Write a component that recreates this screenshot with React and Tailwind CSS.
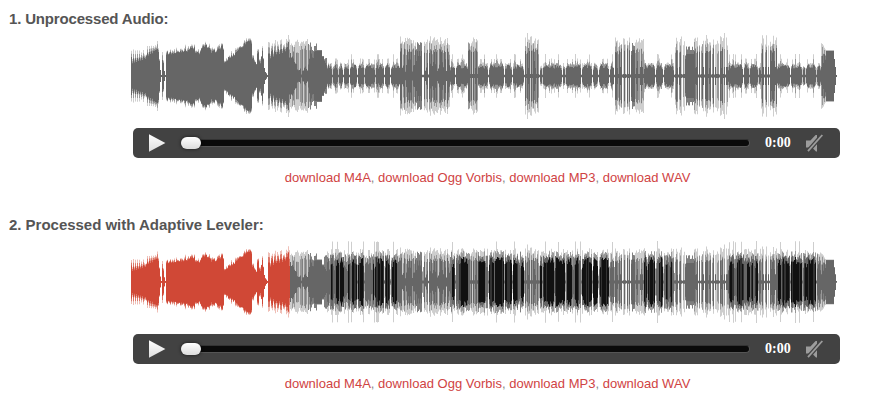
import React from "react";

const MID = 45;
const LENGTH = 706;

// Deterministic noise in 0..1 for a column and a channel
const noise = (x, k) => {
  const v = Math.sin(x * 127.1 + k * 311.7) * 43758.5453;
  return v - Math.floor(v);
};

// Envelope of the opening passage: [column, half height]
const OPENING = [
  [0, 13], [2, 12], [6, 13], [10, 14], [14, 17], [16, 20], [20, 22], [24, 24], [26, 27], [27, 24], [28, 15], [29, 6], [30, 1],
  [31, 16], [32, 13], [33, 5], [34, 1], [34.9, 1], [35, 22], [44, 22], [49, 24], [56, 25], [60, 27], [63, 27],
  [64, 22], [68, 22], [71, 27], [74, 31], [76, 28], [78, 26], [80, 23], [84, 24], [88, 26], [91, 30], [92, 26], [93, 12], [94, 12],
  [97, 17], [99, 18], [103, 21], [107, 26], [112, 30], [115, 33], [119, 35], [120, 31], [121, 18], [123, 15], [125, 11],
  [126, 22], [127, 22], [128, 13], [129, 12], [131, 23], [132, 16], [133, 8], [134, 4], [136, 1], [137, 0],
];

// Loud passages, a letter per column: D dark, m medium, g grey, l light, . gap
const LOUD = [
  [269, "DDlgDggDmDmDgmgD"],
  [293, "Dlgm.DmDgmDmDglmDDmgDmlDmg"],
  [337, "DDgDlDgmDg"],
  [394, "DgDmDlDgDmmgDg"],
  [484, "DDmgDgD.lDl.DlD."],
  [504, "gmmgglmgg"],
  [544, "gDm.gDl.gl"],
  [563, "DmgD.D.gDl.DDDgmD.gD.l"],
  [585, "lgg.DmDlg.lg"],
  [630, "gDl.gD.l.DmDDmlD"],
  [690, "gDmDm"],
];

const SOLID = [
  [285, 291, 27], [500, 504, 26], [554, 563, 22], [695, 703, 25],
];

// Quiet groups: start and end columns
const QUIET = [
  [196, 201], [202, 207], [208, 212], [213, 218], [219, 226], [227, 233], [234, 244], [245, 253], [254, 259],
  [260, 269], [319, 324], [325, 337], [347, 357], [358, 373], [374, 381], [382, 393],
  [409, 411], [412, 431], [432, 434], [435, 450], [451, 461], [462, 467], [468, 478], [479, 483],
  [513, 524], [525, 532], [533, 543], [597, 612], [613, 618], [619, 627], [628, 630],
  [646, 659], [660, 671], [672, 674], [675, 685], [686, 690],
];

// Columns where the leveler raised the passage above its original level
const RAISED = [
  [200, 202], [205, 208], [209, 213], [217, 219], [221, 226], [227, 233], [242, 243], [244, 253], [254, 259], [261, 266],
  [321, 324], [328, 337], [347, 354], [358, 363], [364, 373], [374, 381], [382, 387], [390, 393],
  [409, 411], [412, 423], [424, 434], [436, 441], [444, 448], [451, 461], [462, 467], [469, 478],
  [513, 516], [517, 524], [528, 532], [535, 537], [539, 541], [598, 603], [606, 613], [616, 619], [620, 622], [624, 627],
  [647, 650], [651, 659], [660, 671], [673, 675], [675, 685],
];

const within = (list, x) => list.find(([a, b]) => x >= a && x < b);

function openingHeight(x) {
  for (let i = 1; i < OPENING.length; i++) {
    const [x0, h0] = OPENING[i - 1];
    const [x1, h1] = OPENING[i];
    if (x <= x1) return h0 + ((h1 - h0) * (x - x0)) / (x1 - x0);
  }
  return 0;
}

// Layers of one column, outermost first: [half height, tone]
function column(x, leveled) {
  const a = noise(x, 1);
  const b = noise(x, 2);
  const c = noise(x, 3);
  const s = leveled ? 0.87 : 1;
  if (x < 137) {
    const base = openingHeight(x);
    const h = base + (base > 10 && x > 34 ? a * 2.8 - 0.6 : 0);
    let extra = base > 8 ? 0.5 + b * 4 : 0;
    if (x < 26) {
      const spike = x % 2 === 0 && a > 0.15;
      const dark = spike ? base + 6 - x / 6 : base + a * 2;
      const top = spike ? base + 12 + b * 4 - x / 3.5 : base + 3 + b * 3;
      return [[top * s, "soft"], [((top + dark) / 2) * s, "mid"], [dark * s, "dark"]];
    }
    if (x === 26 || x === 31) extra = 8;
    return [[(h + extra) * s, "soft"], [(h + extra * 0.6) * s, "mid"], [h * s, "dark"]];
  }
  if (x < 158) {
    const t = (x - 137) / 21;
    const h = x % 3 === 1 ? 17 + t * 8 + a * 2 : 21 + t * 7 + a * 5;
    const top = x === 157 ? 41 : x % 3 === 1 ? h + 4 : 28 + t * 4 + b * 7;
    return [[top * s, "soft"], [(h + (top - h) * 0.55) * s, "mid"], [(x === 157 ? 34 : h) * s, "dark"]];
  }
  if (x < 179) {
    const core = x < 171 ? 22 - (x - 158) * 1.6 : x < 176 ? 2 + (x - 171) * 1.4 : 9 + (x - 176) * 4;
    const tone = x % 4 === 0 ? "soft" : x % 3 === 0 ? "grey" : "mid";
    return [[(28 + b * 9) * s, "soft"], [(22 + a * 11) * s, tone], [Math.max(1.5, core + (c - 0.5) * 7) * s, "dark"]];
  }
  if (x < 193) {
    const h = x < 184 ? 18 + a * 9 : x < 191 ? 25 : 19;
    return [[(h + (x < 186 ? 5 + b * 3 : 1)) * s, "grey"], [h * s, "dark"]];
  }
  if (x < 196) return [[(15 + b * 3) * (leveled ? 1.5 : 1), "grey"], [15 - (x - 193) * 2, "dark"]];
  const solid = within(SOLID, x);
  if (solid) {
    const last = solid[1] > 690;
    const h = (solid[2] - (!last && x === solid[0] ? 5 : 0)) * s;
    return [[h + (last ? 0.5 : 3 + a * 5), "grey"], [h - (solid[0] === 285 ? (x % 2 ? 7 : 2) : 0), "dark"]];
  }
  if (x >= 703) return [[Math.max(1, 25 - (x - 702) * 8) * s, "dark"]];
  const loud = LOUD.find(([from, code]) => x >= from && x < from + code.length);
  if (loud) {
    const code = loud[1][x - loud[0]];
    const base = x >= 690 ? 25 : 29;
    const peak = x === 396 ? 42 : x === 593 ? 45 : base + 1 + b * 10;
    const core = x < 300 || (x > 300 && x < 320) || x > 690 ? 4 + a * 7 : 2 + (c > 0.65 ? 7 : 0);
    const layers = {
      D: [[peak + 1, "soft"], [base + a * 5, "mid"], [base - 1 - c * 5, "dark"]],
      m: [[peak, "soft"], [base - 1 - a * 4, "grey"], [core + 6, "dark"]],
      g: [[peak - 2, "soft"], [base - 2 - a * 6, "mid"], [core, "dark"]],
      l: [[peak, "soft"], [core, "dark"]],
      ".": [[1.5, "dark"]],
    }[code];
    return layers.map(([h, tone]) => [h * s, tone]);
  }
  const group = within(QUIET, x);
  if (leveled) {
    const black = within(RAISED, x);
    const tall = b > 0.9 ? 6 : 0;
    const outer = [22 + b * 13 + tall, "soft"];
    if (black) {
      const side = x === black[0] || x === black[1] - 1;
      return [outer, [23 + a * 8, "mid"], [21 + c * 6, "dark"], [(side ? 14 : 18) + a * 7, c > 0.72 ? "deep" : "black"]];
    }
    if (!group) return [[b * 32, "soft"], [a * 20, "mid"], [1.5, "dark"]];
    return [outer, [19 + a * 11, x % 3 ? "grey" : "mid"], [11 + c * 13, "dark"]];
  }
  if (!group) return [[b > 0.6 ? 8 : 1, "soft"], [1.2, "dark"]];
  const side = x === group[0] || x === group[1] - 1 ? 0.75 : 1;
  const spike = b > 0.88 ? 7 : b > 0.65 ? 3 : 0;
  return [[(11 + b * 4 + spike) * side, "soft"], [(9 + a * 4 + spike * 0.6) * side, "mid"], [(7.5 + c * 4) * side, "dark"]];
}

const GREYS = { soft: "#cecece", mid: "#989898", grey: "#7f7f7f", dark: "#666666", deep: "#333333", black: "#111111" };
const REDS = { soft: "#efbfb7", mid: "#dc7768", grey: "#d65b4a", dark: "#d04836", deep: "#d04836", black: "#d04836" };

function Waveform({ leveled, played }) {
  const paths = {};
  const order = ["soft", "mid", "grey", "dark", "deep", "black"];
  for (let x = 0; x < LENGTH; x++) {
    const tones = x < played ? REDS : GREYS;
    for (const [h, tone] of column(x, leveled)) {
      const key = `${order.indexOf(tone)}${tones[tone]}`;
      paths[key] = `${paths[key] || ""}M${x} ${(MID - h).toFixed(1)}h1v${(2 * h).toFixed(1)}h-1z`;
    }
  }
  return (
    <svg className="ml-[131px] block" width={LENGTH} height="90" viewBox="0 0 706 90">
      {Object.keys(paths).sort().map((key) => (
        <path key={key} d={paths[key]} fill={key.slice(1)} />
      ))}
    </svg>
  );
}

function Player() {
  return (
    <div className="mt-[7px] ml-[133px] flex h-[30px] w-[707px] items-center rounded-[5px] bg-[#424242]">
      <svg className="ml-[15px] shrink-0" width="19" height="20" viewBox="0 0 19 20">
        <defs>
          <linearGradient id="play" x1="0" y1="0" x2="0" y2="1">
            <stop offset="0" stopColor="#fff" />
            <stop offset="1" stopColor="#ddd" />
          </linearGradient>
        </defs>
        <path d="M1 1.2 17.4 10 1 18.8z" fill="url(#play)" />
      </svg>
      <div className="ml-[14px] flex h-[8px] w-[569px] items-center rounded-full border border-[#555] border-t-[#333] bg-[#0a0a0a]">
        <div className="-ml-px h-[12px] w-[20px] shrink-0 rounded-[6px] bg-linear-to-b from-white to-[#dcdcdc] shadow-[0_0_3px_1px_rgba(0,0,0,0.35)]" />
      </div>
      <span className="ml-[15px] w-[26px] font-['Liberation_Serif',serif] text-[14px] leading-[16px] font-bold text-white">0:00</span>
      <svg className="ml-[14px] shrink-0" width="19" height="20" viewBox="0 0 19 20">
        <path d="M1 7.5h4.4L10.6 2H12v16.6h-1L7 14.6H1z" fill="#9c9c9c" />
        <path d="M17.3 2 3 18.2" stroke="#424242" strokeWidth="4.2" />
        <path d="M17.3 2 3 18.2" stroke="#9c9c9c" strokeWidth="1.8" />
      </svg>
    </div>
  );
}

const FORMATS = ["M4A", "Ogg Vorbis", "MP3", "WAV"];

function Sample({ title, leveled = false, played = 0 }) {
  return (
    <section className="h-[206px]">
      <h2
        className={`h-[22px] pl-[9px] text-[15px] leading-[20px] font-bold whitespace-nowrap text-[#555] ${leveled ? "tracking-[-0.02px]" : "tracking-[-0.17px]"}`}
      >
        {title}
      </h2>
      <Waveform leveled={leveled} played={played} />
      <Player />
      <p className="mt-[10px] ml-[134px] w-[707px] text-center text-[13px] leading-[20px] tracking-[0.015px] text-[#888]">
        {FORMATS.map((format, i) => (
          <React.Fragment key={format}>
            {i > 0 && ", "}
            <a className="text-[#d04343]">download {format}</a>
          </React.Fragment>
        ))}
      </p>
    </section>
  );
}

export default function App() {
  return (
    <main className="h-[406px] w-[880px] overflow-hidden bg-white pt-[9px] font-['Liberation_Sans',Arial,sans-serif]">
      <Sample title="1. Unprocessed Audio:" />
      <Sample title="2. Processed with Adaptive Leveler:" leveled played={159} />
    </main>
  );
}
